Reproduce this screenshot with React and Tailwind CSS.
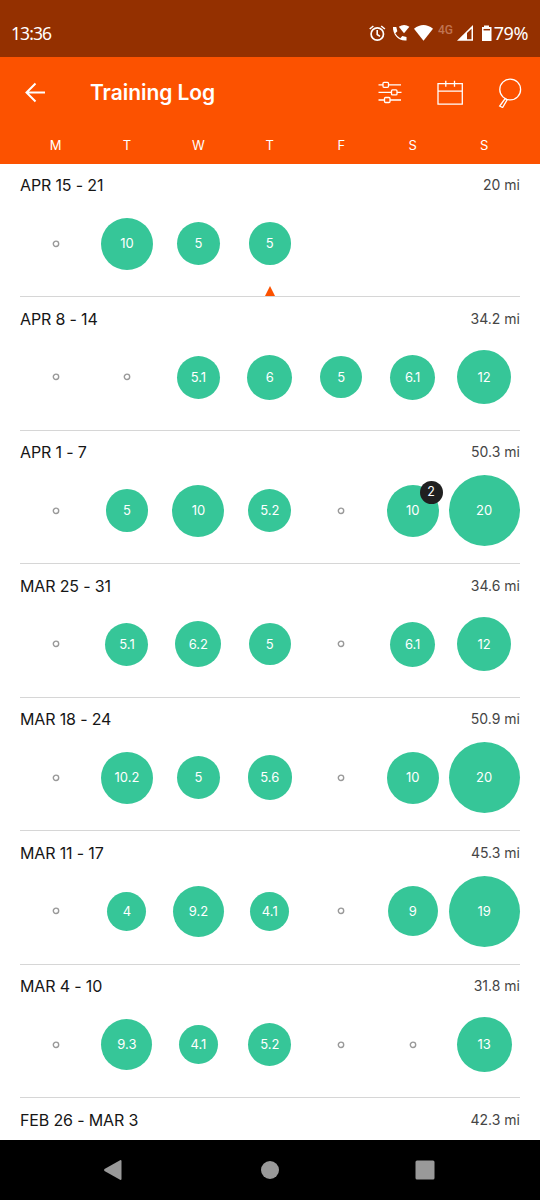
const WEEKS = [
  { label: "APR 15 - 21", total: "20 mi", today: 3, days: [0, [10, 52], [5, 42.5], [5, 42.5], null, null, null] },
  { label: "APR 8 - 14", total: "34.2 mi", days: [0, 0, [5.1, 43], [6, 45], [5, 42.5], [6.1, 45], [12, 54]] },
  { label: "APR 1 - 7", total: "50.3 mi", days: [0, [5, 42.5], [10, 52], [5.2, 43], 0, [10, 52, 2], [20, 71]] },
  { label: "MAR 25 - 31", total: "34.6 mi", days: [0, [5.1, 43], [6.2, 46], [5, 42.5], 0, [6.1, 45], [12, 54]] },
  { label: "MAR 18 - 24", total: "50.9 mi", days: [0, [10.2, 52], [5, 42.5], [5.6, 44.5], 0, [10, 52], [20, 71]] },
  { label: "MAR 11 - 17", total: "45.3 mi", days: [0, [4, 39], [9.2, 51], [4.1, 39], 0, [9, 50], [19, 71]] },
  { label: "MAR 4 - 10", total: "31.8 mi", days: [0, [9.3, 51], [4.1, 39], [5.2, 43], 0, 0, [13, 55]] },
  { label: "FEB 26 - MAR 3", total: "42.3 mi", days: [] },
];

function Day({ day, today }) {
  return (
    <div className="relative flex h-full items-center justify-center">
      {day === 0 && (
        <svg className="size-[8px]" viewBox="0 0 8 8" fill="none">
          <circle cx="4" cy="3.8" r="2.7" stroke="#999" strokeWidth="1.4" />
        </svg>
      )}
      {Array.isArray(day) && (
        <div
          className="relative flex shrink-0 items-center justify-center rounded-full bg-[#36c698] text-[13px] leading-none text-white"
          style={{ width: day[1], height: day[1] }}
        >
          <span>{day[0]}</span>
          {day[2] && (
            <span className="absolute -top-[4px] -right-[4px] flex size-[23px] items-center justify-center rounded-full bg-[#202020] text-[12.5px]">
              {day[2]}
            </span>
          )}
        </div>
      )}
      {today && (
        <svg className="absolute bottom-0 left-1/2 h-[10px] w-[10px] -translate-x-1/2" viewBox="0 0 10 10">
          <path d="M5 0L10 10H0Z" fill="#fc5200" />
        </svg>
      )}
    </div>
  );
}

function Week({ week }) {
  return (
    <section className="flex h-[133.5px] shrink-0 flex-col">
      <div className="flex h-[27.5px] shrink-0 items-start justify-between pt-[10.9px] whitespace-nowrap">
        <h2 className="text-[16px] leading-[22px] tracking-[-0.15px] text-[#161616]">{week.label}</h2>
        <span className="text-[14px] leading-[22px] text-[#454545]">{week.total}</span>
      </div>
      <div className="mr-[0.2px] -ml-[0.2px] grid h-[105px] shrink-0 grid-cols-7">
        {week.days.map((day, i) => (
          <Day key={i} day={day} today={week.today === i} />
        ))}
      </div>
      <div className="h-[1px] shrink-0 bg-[#d6d6d6]" />
    </section>
  );
}

function StatusBar() {
  return (
    <div className="flex h-[57px] shrink-0 items-center justify-between bg-[#943000] pt-[10px] pr-[12px] pl-[11px] font-['Noto_Sans',sans-serif] text-[18px] text-white">
      <span className="text-[17.5px] tracking-[-0.9px]">13:36</span>
      <div className="flex items-center">
        <svg className="h-[24px] w-[125px]" viewBox="368 22 125 24" fill="none" stroke="white">
          <circle cx="377.3" cy="34" r="6.2" strokeWidth="1.7" />
          <path d="M377.2 30V34.5L380 36.3M369.7 29L373.4 26M384.9 29L381.2 26" strokeWidth="1.6" />
          <path d="M393 27h3.3l1 4.2-2 2q2 3.5 5 5l2-2.1 4.2 1v3.4c-7.6 1-14-6-13.5-13.5Z" fill="white" stroke="none" />
          <path d="M398.8 26.8q5.3-3.8 10.6 0L404 33.2Z" fill="white" stroke="none" />
          <path d="M414 28.8q9.5-7.5 19 0L423.5 40.8Z" fill="white" stroke="none" />
          <text x="438" y="34" fontSize="12" fontFamily="Roboto, sans-serif" fontWeight="500" fill="#c07452" stroke="none" textLength="15" lengthAdjust="spacingAndGlyphs">4G</text>
          <path d="M457 40.8L473 25V40.8Z" fill="white" stroke="none" />
          <path d="M467 33V39.3H471.5V28.7Z" fill="#943000" stroke="none" />
          <path d="M484 25.5H489V27H491.5V41H482V27H484Z" fill="white" stroke="none" />
          <path d="M483.5 29.7H490" stroke="#943000" strokeWidth="1.5" />
        </svg>
        <span className="ml-[1px] tracking-[-0.4px]">79%</span>
      </div>
    </div>
  );
}

function Header() {
  return (
    <header className="flex h-[107px] shrink-0 flex-col bg-[#fc5200] text-white">
      <div className="flex h-[72px] items-center pr-[18px] pl-[24px]">
        <svg className="size-[22px]" viewBox="0 0 22 22" fill="none" stroke="white" strokeWidth="2">
          <path d="M21 10.5H2.5M11.5 1.5L2.5 10.5L11.5 19.5" />
        </svg>
        <h1 className="ml-[44px] grow text-[21px] font-semibold tracking-[-0.05px] whitespace-nowrap">Training Log</h1>
        <svg className="h-[30px] w-[146px]" viewBox="376 77.5 146 30" fill="none" stroke="white" strokeWidth="1.3">
          <path d="M378.5 84.3H383M388.5 84.3H401M378.5 91.9H391.5M397 91.9H401.5M378.5 99.5H384.5M390 99.5H401" />
          <rect x="383" y="81.8" width="5.5" height="5" rx="1" />
          <rect x="391.5" y="89.4" width="5.5" height="5" rx="1" />
          <rect x="384.5" y="97" width="5.5" height="5" rx="1" />
          <path d="M438 83.2H462.3V103.7H438ZM438 90.7H462.3M445.8 80.2V86.2M454.5 80.2V86.2" />
          <circle cx="510.2" cy="89" r="10.4" />
          <path d="M505.2 98L499.7 105.6L502.6 107L507.2 99.2Z" />
        </svg>
      </div>
      <div className="mr-[0.2px] -ml-[0.2px] grid grid-cols-7 px-[20px] pt-[6px] text-center text-[13px] leading-[21px]">
        {["M", "T", "W", "T", "F", "S", "S"].map((d, i) => (
          <span key={i}>{d}</span>
        ))}
      </div>
    </header>
  );
}

export default function App() {
  return (
    <div className="flex h-[1200px] w-[540px] flex-col overflow-hidden bg-white font-['Inter',sans-serif]">
      <StatusBar />
      <Header />
      <main className="-mt-[0.5px] flex min-h-0 grow flex-col overflow-hidden px-[20px]">
        {WEEKS.map((w) => (
          <Week key={w.label} week={w} />
        ))}
      </main>
      <nav className="flex h-[60px] shrink-0 items-center justify-center bg-black">
        <svg className="h-[24px] w-[340px]" viewBox="100 1158 340 24" fill="#999">
          <path d="M104.5 1169L120.5 1160Q121.5 1160 121.5 1161V1179Q121.5 1180 120.5 1180L104.5 1171Q103.5 1170 104.5 1169Z" />
          <circle cx="270" cy="1170" r="9" />
          <rect x="415.5" y="1160.5" width="19" height="19" rx="1.5" />
        </svg>
      </nav>
    </div>
  );
}
